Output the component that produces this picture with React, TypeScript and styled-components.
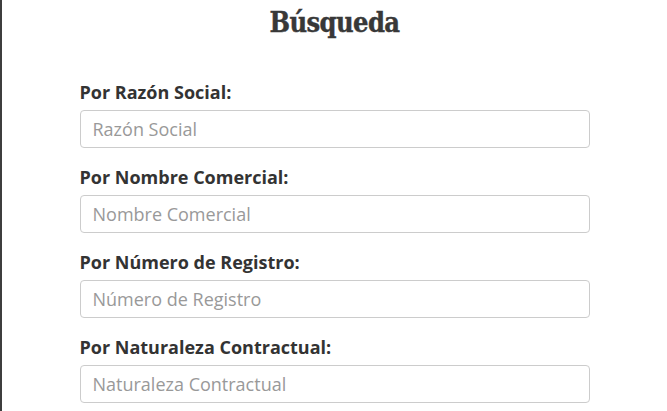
import React from "react";
import styled, { createGlobalStyle } from "styled-components";

const GlobalStyle = createGlobalStyle`
  html, body {
    margin: 0;
    padding: 0;
    background: #ffffff;
  }
  body {
    font-family: "Open Sans", "Liberation Sans", sans-serif;
  }
`;

// page frame with the dark rule on the left
const Page = styled.div`
  min-height: 411px;
  border-left: 2px solid #3d3d3d;
  box-sizing: border-box;
`;

const SearchForm = styled.form`
  width: 510px;
  margin: 0 auto;
  padding-top: 6px;
  display: flex;
  flex-direction: column;
`;

const Title = styled.h2`
  margin: 0 0 40px;
  text-align: center;
  font-family: "DejaVu Serif", "Liberation Serif", serif;
  font-stretch: condensed;
  font-weight: bold;
  font-size: 27px;
  line-height: 34px;
  color: #383838;
  letter-spacing: -0.6px;
  -webkit-text-stroke: 0.4px #383838;
`;

const Field = styled.div`
  display: flex;
  flex-direction: column;
  margin-bottom: 17px;
`;

const Label = styled.label`
  font-size: 18px;
  font-weight: 700;
  line-height: 25px;
  color: #333333;
  margin-bottom: 5px;
`;

const Input = styled.input`
  height: 38px;
  box-sizing: border-box;
  padding: 6px 12px;
  border: 1px solid #cccccc;
  border-radius: 4px;
  font-family: "Open Sans", "Liberation Sans", sans-serif;
  font-size: 18px;
  color: #555555;
  background: #ffffff;
  outline: none;

  &::placeholder {
    color: #999999;
  }
`;

const fields = [
  { id: "razon", label: "Por Razón Social:", placeholder: "Razón Social" },
  { id: "nombre", label: "Por Nombre Comercial:", placeholder: "Nombre Comercial" },
  { id: "registro", label: "Por Número de Registro:", placeholder: "Número de Registro" },
  { id: "naturaleza", label: "Por Naturaleza Contractual:", placeholder: "Naturaleza Contractual" },
];

export default function App() {
  return (
    <>
      <GlobalStyle />
      <Page>
        <SearchForm onSubmit={(e) => e.preventDefault()}>
          <Title>Búsqueda</Title>
          {fields.map((f) => (
            <Field key={f.id}>
              <Label htmlFor={f.id}>{f.label}</Label>
              <Input id={f.id} type="text" placeholder={f.placeholder} />
            </Field>
          ))}
        </SearchForm>
      </Page>
    </>
  );
}
